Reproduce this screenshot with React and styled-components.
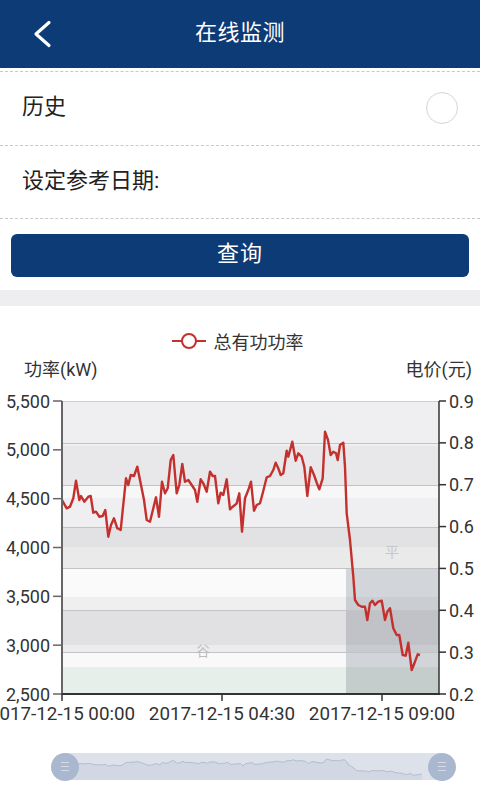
import React from 'react';
import styled, { createGlobalStyle } from 'styled-components';

const NAVY = '#0d3b76';
const RED = '#c4302e';

const GlobalStyle = createGlobalStyle`
  html, body {
    margin: 0;
    padding: 0;
    background: #fff;
    font-family: Roboto, "Noto Sans CJK SC", "Noto Sans", sans-serif;
  }
`;

const Page = styled.div`
  width: 480px;
  height: 800px;
  overflow: hidden;
  background: #fff;
`;

const Header = styled.header`
  height: 68px;
  background: ${NAVY};
  display: grid;
  grid-template-columns: 80px 1fr 80px;
  align-items: center;
  color: #fff;
`;

const BackButton = styled.button`
  border: 0;
  background: none;
  padding: 0 0 0 33px;
  height: 68px;
  display: flex;
  align-items: center;
  cursor: pointer;
`;

const Title = styled.h1`
  margin: 0 0 2px;
  font-size: 22px;
  line-height: 1;
  font-weight: 400;
  text-align: center;
  letter-spacing: 0.5px;
`;

// form rows with dashed separators
const Form = styled.section`
  padding-top: 3px;
`;

const Row = styled.div`
  box-sizing: border-box;
  height: 74px;
  padding: 0 22px 3px;
  border-top: 1px dashed #c9c9c9;
  border-bottom: ${(p) => (p.$last ? '1px dashed #c9c9c9' : '0')};
  display: flex;
  align-items: center;
  justify-content: space-between;
  font-size: 22px;
  line-height: 1;
  color: #222;
`;

const Radio = styled.span`
  width: 30px;
  height: 30px;
  border-radius: 50%;
  border: 1px solid #d8d8d8;
  box-shadow: inset 0 0 2px rgba(0, 0, 0, 0.06);
  margin-top: 1px;
`;

const ButtonWrap = styled.div`
  padding: 15px 11px 13px;
`;

const QueryButton = styled.button`
  width: 100%;
  height: 43px;
  border: 0;
  border-radius: 6px;
  background: ${NAVY};
  color: #fff;
  font-family: inherit;
  font-size: 22px;
  line-height: 1;
  padding: 0 0 4px;
  letter-spacing: 1px;
`;

const GrayBand = styled.div`
  height: 16px;
  background: #eeeef0;
`;

const ChartCard = styled.section`
  padding-top: 23px;
`;

const Legend = styled.div`
  height: 24px;
  display: flex;
  align-items: center;
  justify-content: center;
  gap: 7px;
  font-size: 18px;
  color: #333;
  padding-right: 6px;
`;

const PlotSvg = styled.svg`
  display: block;
  font-family: Roboto, "Noto Sans CJK SC", sans-serif;
`;

const Slider = styled.div`
  position: relative;
  margin: 23px 0 0 62px;
  width: 379px;
  height: 27px;
  background: #dde1ea;
`;

const Handle = styled.span`
  position: absolute;
  top: -0.5px;
  left: ${(p) => (p.$side === 'left' ? '-11px' : 'auto')};
  right: ${(p) => (p.$side === 'right' ? '-15px' : 'auto')};
  width: 28px;
  height: 28px;
  border-radius: 50%;
  background: #a9b8ce;
  display: flex;
  flex-direction: column;
  align-items: center;
  justify-content: center;
  gap: 3px;

  i {
    display: block;
    width: 8px;
    height: 1px;
    background: #d3dbe6;
  }
`;

// line traced from the sample, 3x scale around (40, 390)
const raw = [
  [66,330],[80,355],[90,350],[100,325],[108,272],[118,330],[123,318],[133,335],[145,320],[152,318],
  [160,368],[168,365],[178,380],[188,378],[196,360],[205,440],[213,405],[222,385],[232,415],[242,420],
  [258,265],[265,285],[272,255],[282,258],[292,230],[300,270],[312,330],[320,390],[330,395],[340,355],
  [348,322],[357,380],[366,275],[375,310],[383,295],[392,210],[400,195],[410,310],[418,285],[427,222],
  [435,275],[445,270],[455,285],[465,300],[472,335],[482,268],[490,280],[500,305],[510,245],[518,258],
  [525,258],[535,340],[542,308],[550,315],[560,268],[570,358],[578,350],[585,345],[590,340],[598,310],
  [606,425],[615,325],[625,300],[633,275],[642,362],[650,345],[660,340],[668,310],[680,262],[690,258],
  [700,240],[707,218],[715,235],[722,255],[730,250],[740,182],[745,200],[757,155],[767,212],[775,190],
  [785,200],[793,230],[802,318],[812,232],[822,255],[830,278],[838,298],[848,265],[855,125],[864,150],
  [872,195],[880,185],[888,190],[893,210],[900,165],[910,158],[915,230],[920,370],[930,450],[940,560],
  [945,630],[955,645],[965,650],[975,650],[982,690],[990,640],[997,632],[1005,645],[1015,635],[1025,632],
  [1035,690],[1042,665],[1050,655],[1060,715],[1070,735],[1078,735],[1088,795],[1097,797],[1105,758],
  [1115,840],[1125,815],[1133,793],[1140,795],
];
const points = raw.map(([x, y]) => [40 + x / 3, 390 + y / 3]);

const X0 = 62;
const X1 = 439;
const Y0 = 401;
const Y1 = 694;

const bands = [
  [401, 446, '#efeef0'],
  [446, 485, '#e8e7e9'],
  [485, 498, '#f7f7f8'],
  [498, 527, '#efeef0'],
  [527, 547, '#e2e1e3'],
  [547, 568, '#eaeaeb'],
  [568, 597, '#fafafb'],
  [597, 610, '#efeff0'],
  [610, 645, '#e1e0e2'],
  [645, 653, '#ececed'],
  [653, 667, '#f9f9fa'],
  [667, 694, '#e6efea'],
];

const leftTicks = ['5,500', '5,000', '4,500', '4,000', '3,500', '3,000', '2,500'];
const rightTicks = ['0.9', '0.8', '0.7', '0.6', '0.5', '0.4', '0.3', '0.2'];
const xTicks = [
  [62, '2017-12-15 00:00'],
  [222, '2017-12-15 04:30'],
  [382, '2017-12-15 09:00'],
];

const toPath = (pts) => pts.map(([x, y], i) => `${i ? 'L' : 'M'}${x.toFixed(1)} ${y.toFixed(1)}`).join(' ');

const ChevronLeft = () => (
  <svg width="20" height="30" viewBox="0 0 20 30">
    <path d="M16 3.5 L3 15 L16 26.5" fill="none" stroke="#fff" strokeWidth="3.2" strokeLinecap="round" strokeLinejoin="round" />
  </svg>
);

const LegendMark = () => (
  <svg width="36" height="18" viewBox="0 0 36 18">
    <line x1="1" y1="9" x2="35" y2="9" stroke={RED} strokeWidth="2" />
    <circle cx="18" cy="9" r="7" fill="#fff" stroke={RED} strokeWidth="2" />
  </svg>
);

const Plot = () => {
  const leftStep = (Y1 - Y0) / (leftTicks.length - 1);
  const rightStep = (Y1 - Y0) / (rightTicks.length - 1);
  return (
    <PlotSvg width="480" height="377" viewBox="0 353 480 377">
      <text x="24" y="369" fontSize="18" fill="#333" dominantBaseline="central">功率(kW)</text>
      <text x="472" y="369" fontSize="18" fill="#333" textAnchor="end" dominantBaseline="central">电价(元)</text>

      {bands.map(([a, b, c]) => (
        <rect key={a} x={X0} y={a} width={X1 - X0} height={b - a} fill={c} />
      ))}
      <rect x="346" y="568" width={X1 - 346} height={Y1 - 568} fill="rgba(105,115,125,0.27)" />

      <line x1={X0} y1={Y0 + 0.5} x2={X1} y2={Y0 + 0.5} stroke="#cfcfd1" />
      {rightTicks.slice(1, -1).map((t, i) => {
        const y = Math.round(Y0 + rightStep * (i + 1)) + 0.5;
        return <line key={t} x1={X0} y1={y} x2={X1} y2={y} stroke="#c3c3c6" />;
      })}

      <text x="203" y="651" fontSize="14" fill="#bdbdbd" textAnchor="middle" dominantBaseline="central">谷</text>
      <text x="392" y="552" fontSize="14" fill="#c6c6c8" textAnchor="middle" dominantBaseline="central">平</text>

      <path d={toPath(points)} fill="none" stroke={RED} strokeWidth="2.4" strokeLinejoin="round" />

      <line x1={X0} y1={Y0} x2={X0} y2={Y1 + 1} stroke="#666" strokeWidth="2" />
      <line x1={X1} y1={Y0} x2={X1} y2={Y1 + 1} stroke="#333" strokeWidth="1.5" />
      <line x1={X0 - 1} y1={Y1} x2={X1 + 1} y2={Y1} stroke="#333" strokeWidth="2" />

      {leftTicks.map((t, i) => {
        const y = Y0 + leftStep * i;
        return (
          <g key={t}>
            <line x1={X0 - 9} y1={y} x2={X0} y2={y} stroke="#666" strokeWidth="1.5" />
            <text x="50" y={y} fontSize="18" fill="#333" textAnchor="end" dominantBaseline="central">{t}</text>
          </g>
        );
      })}
      {rightTicks.map((t, i) => {
        const y = Y0 + rightStep * i;
        return (
          <g key={t}>
            <line x1={X1} y1={y} x2={X1 + 7} y2={y} stroke="#333" strokeWidth="1.5" />
            <text x="449" y={y} fontSize="18" fill="#333" dominantBaseline="central">{t}</text>
          </g>
        );
      })}
      {xTicks.map(([x, t]) => (
        <g key={t}>
          <line x1={x} y1={Y1} x2={x} y2={Y1 + 7} stroke="#333" strokeWidth="1.5" />
          <text x={x} y="714" fontSize="18.8" fill="#333" textAnchor="middle" dominantBaseline="central">{t}</text>
        </g>
      ))}
    </PlotSvg>
  );
};

const Sparkline = () => {
  const mapped = points.map(([x, y]) => [(x - X0) * (379 / (X1 - X0)), 4 + ((y - Y0) / (Y1 - Y0)) * 20]);
  const line = toPath(mapped);
  const last = mapped[mapped.length - 1][0];
  return (
    <svg width="379" height="27" viewBox="0 0 379 27" style={{ display: 'block' }}>
      <path d={`${line} L${last} 27 L0 27 Z`} fill="#d2d8e3" />
      <path d={line} fill="none" stroke="#b3bdcc" strokeWidth="1" />
    </svg>
  );
};

const App = () => (
  <Page>
    <GlobalStyle />
    <Header>
      <BackButton aria-label="返回">
        <ChevronLeft />
      </BackButton>
      <Title>在线监测</Title>
      <span />
    </Header>

    <Form>
      <Row>
        <span>历史</span>
        <Radio />
      </Row>
      <Row $last>
        <span>设定参考日期:</span>
      </Row>
    </Form>

    <ButtonWrap>
      <QueryButton>查询</QueryButton>
    </ButtonWrap>
    <GrayBand />

    <ChartCard>
      <Legend>
        <LegendMark />
        <span>总有功功率</span>
      </Legend>
      <Plot />
      <Slider>
        <Sparkline />
        <Handle $side="left"><i /><i /><i /></Handle>
        <Handle $side="right"><i /><i /><i /></Handle>
      </Slider>
    </ChartCard>
  </Page>
);

export default App;
